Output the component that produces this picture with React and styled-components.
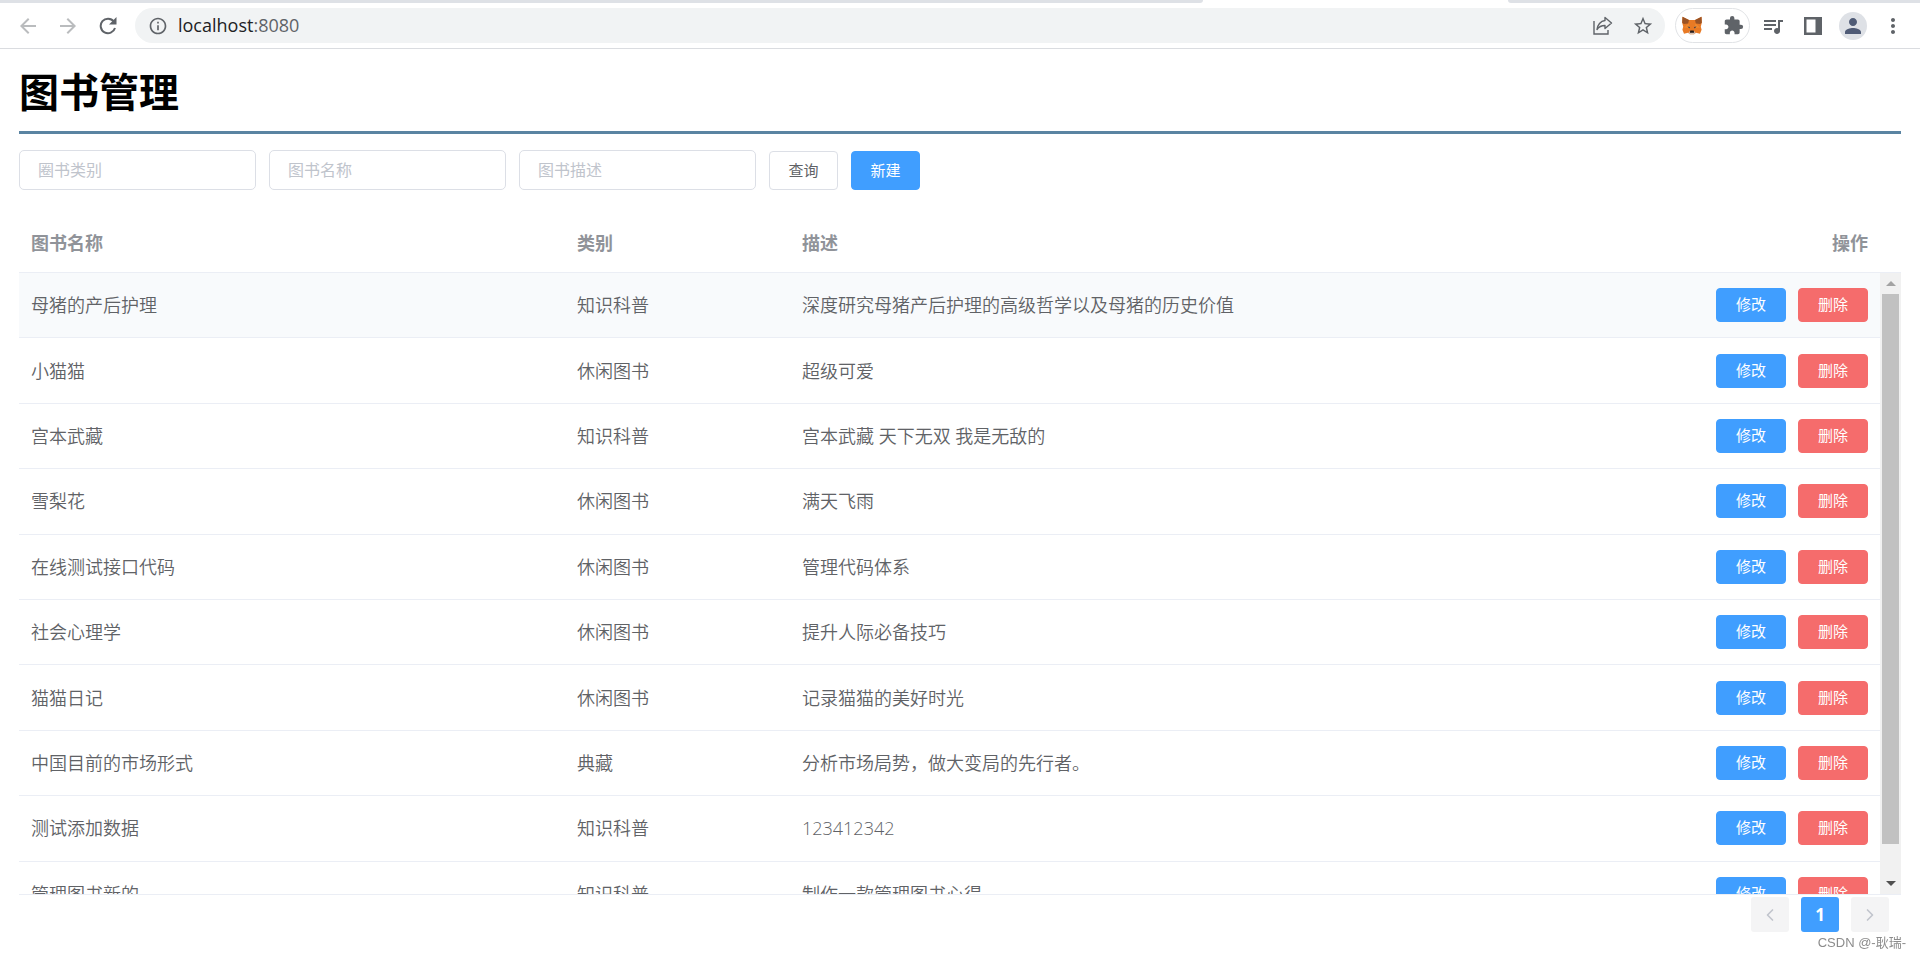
import React from "react";
import styled, { createGlobalStyle, css } from "styled-components";
import { MdArrowBack, MdArrowForward, MdInfoOutline, MdStarBorder, MdExtension, MdQueueMusic, MdPerson, MdMoreVert } from "react-icons/md";
import { ChevronLeft, ChevronRight } from "lucide-react";

const Global = createGlobalStyle`
  * { box-sizing: border-box; }
  body {
    margin: 0;
    background: #fff;
    font-family: "Open Sans", "Noto Sans CJK SC", sans-serif;
    color: #606266;
  }
  button, input { font-family: inherit; }
`;

/* Browser chrome */
const TabStrip = styled.div`
  display: flex;
  height: 3px;
  background: #fff;
`;
const InactiveTabs = styled.div`
  flex: ${(p) => p.$grow};
  background: #dee1e6;
  border-radius: ${(p) => (p.$end ? "0 0 0 8px" : "0 0 8px 0")};
`;
const ActiveTab = styled.div`
  flex: 305;
`;
const Toolbar = styled.header`
  display: flex;
  align-items: center;
  height: 46px;
  padding: 0 15px 0 16px;
  border-bottom: 1px solid #dadce0;
`;
const IconButton = styled.button`
  display: flex;
  align-items: center;
  justify-content: center;
  flex: none;
  width: 24px;
  height: 24px;
  padding: 0;
  border: 0;
  background: none;
  color: ${(p) => (p.$dim ? "#babcbe" : "#5f6368")};
`;
const NavGroup = styled.nav`
  display: flex;
  gap: 16px;
  margin-right: 15px;
`;
const AddressBar = styled.div`
  display: flex;
  align-items: center;
  flex: 1;
  height: 35px;
  padding: 0 10px 0 11px;
  gap: 8px;
  border-radius: 18px;
  background: #f1f3f4;
`;
const Address = styled.div`
  flex: 1;
  padding-bottom: 2px;
  font-size: 18px;
  line-height: 24px;
  color: #5f6368;
  b { font-weight: 400; color: #202124; }
`;
const AddressActions = styled.div`
  display: flex;
  gap: 16px;
`;
const Extensions = styled.div`
  display: flex;
  align-items: center;
  justify-content: space-between;
  width: 75px;
  height: 35px;
  margin: 0 11px 0 10px;
  padding: 0 4px;
  border: 1px solid #e1e3e6;
  border-radius: 18px;
`;
const BrowserActions = styled.div`
  display: flex;
  align-items: center;
  gap: 16px;
`;
const Avatar = styled.button`
  display: flex;
  align-items: center;
  justify-content: center;
  width: 28px;
  height: 28px;
  margin: 0 -2px;
  padding: 0;
  border: 0;
  border-radius: 50%;
  background: #dee1e6;
  color: #4f5b76;
`;

/* Page */
const Page = styled.main`
  padding: 0 19px;
`;
const Title = styled.h1`
  margin: 0 0 16px;
  padding: 13px 0 9px;
  border-bottom: 3px solid #5a84a2;
  font-size: 40px;
  line-height: 60px;
  color: #000;
`;
const SearchForm = styled.form`
  display: flex;
  align-items: flex-end;
  gap: 13px;
  margin-bottom: 24px;
`;
const Field = styled.input`
  width: 237px;
  height: 40px;
  padding: 0 18px;
  border: 1px solid #dcdfe6;
  border-radius: 5px;
  font-size: 16px;
  color: #606266;
  outline: none;
  &::placeholder { color: #c0c4cc; opacity: 1; }
`;
const tones = {
  plain: css`background: #fff; border-color: #dcdfe6; color: #606266;`,
  primary: css`background: #409eff; border-color: #409eff; color: #fff;`,
  danger: css`background: #f56c6c; border-color: #f56c6c; color: #fff;`,
};
const Button = styled.button`
  height: ${(p) => (p.$small ? 34 : 39)}px;
  width: ${(p) => (p.$small ? 70 : 69)}px;
  padding: 0 0 2px;
  border: 1px solid;
  border-radius: 4px;
  font-size: 15px;
  line-height: 20px;
  ${(p) => tones[p.$tone]}
`;
const HeadWrap = styled.div`
  padding-right: 21px;
  border-bottom: 1px solid #ebeef5;
`;
const Table = styled.table`
  width: 100%;
  height: ${(p) => (p.$body ? "654px" : "auto")};
  table-layout: fixed;
  border-spacing: 0;
  font-size: 18px;
  line-height: 28px;
`;
const HeadCell = styled.th`
  padding: 15px 12px;
  text-align: ${(p) => (p.$right ? "right" : "left")};
  font-weight: 700;
  color: #909399;
`;
const Cell = styled.td`
  padding: 0 12px;
  border-bottom: 1px solid #ebeef5;
  font-weight: 350;
`;
const Row = styled.tr`
  background: ${(p) => (p.$hovered ? "#f8fafc" : "#fff")};
`;
const RowActions = styled.div`
  display: flex;
  justify-content: flex-end;
  gap: 12px;
`;
const BodyWrap = styled.div`
  display: flex;
  height: 622px;
  border-bottom: 1px solid #ebeef5;
`;
const Scroller = styled.div`
  flex: 1;
  overflow-y: auto;
  scrollbar-width: none;
`;
const ScrollBar = styled.div`
  display: flex;
  flex-direction: column;
  width: 21px;
  background: #f1f1f1;
`;
const ScrollArrow = styled.div`
  display: flex;
  align-items: center;
  justify-content: center;
  height: 21px;
`;
const ScrollTrack = styled.div`
  flex: 1;
  padding: 0 2px;
`;
const ScrollThumb = styled.div`
  height: 95%;
  background: #c1c1c1;
`;
const Pagination = styled.nav`
  display: flex;
  justify-content: flex-end;
  gap: 12px;
  padding: 2px 12px 0;
`;
const PageButton = styled.button`
  display: flex;
  align-items: center;
  justify-content: center;
  width: 38px;
  height: 35px;
  padding: 0;
  border: 0;
  border-radius: 3px;
  font-size: 17px;
  font-weight: 700;
  background: ${(p) => (p.$active ? "#409eff" : "#f4f4f5")};
  color: ${(p) => (p.$active ? "#fff" : "#c0c4cc")};
`;
const Watermark = styled.div`
  position: fixed;
  right: 14px;
  bottom: 7px;
  font-family: "Liberation Sans", "Noto Sans CJK SC", sans-serif;
  font-size: 13px;
  line-height: 20px;
  color: #8c8c8c;
`;

const ShareIcon = () => (
  <svg width="22" height="22" viewBox="0 0 22 22" fill="none" stroke="#5f6368" strokeWidth="1.4">
    <path d="M2 6v13h14v-4" />
    <path d="M13 2.5 19.5 8 13 13.5v-3c-3.500 0-6 1-8 4 .5-4.500 3.500-8.500 8-9z" strokeLinejoin="round" />
  </svg>
);
const FoxIcon = () => (
  <svg width="20" height="19" viewBox="0 0 20 19">
    <path d="M.5.8 7 4h6L19.500.8l.3 6-1 4 .8 3-1.600 4-4-1-2 1.500H8L6 16.800l-4 1-1.600-4 .8-3-1-4z" fill="#e87a25" />
    <path d="M.5.8 7 4l-.8 3.500L1.800 8 .2 6.800zM19.500.8 13 4l.8 3.500 4.400.5 1.600-1.200z" fill="#9a5325" />
    <path d="m6.500 7.500-4.500 4 4 .5 1.500-1zM13.500 7.500l4.500 4-4 .5-1.500-1z" fill="#ee8a30" />
    <path d="m5.500 10.500 2.500.6-.6 1.400zM14.500 10.500l-2.500.6.6 1.400z" fill="#2f3b52" />
    <path d="m8 15-1.500 1.800L8 18.300h4l1.500-1.500L12 15z" fill="#d7c1b3" />
    <path d="M8.300 14.600h3.400l.5 2.200H7.800z" fill="#241a18" />
  </svg>
);
const PanelIcon = () => (
  <svg width="18" height="18" viewBox="0 0 18 18">
    <path fill="#5f6368" fillRule="evenodd" d="M0 0h18v18H0zM2.500 2.500v13h9v-13z" />
  </svg>
);
const ReloadIcon = () => (
  <svg width="18" height="18" viewBox="0 0 18 18">
    <path d="M14.800 4.500A7.300 7.300 0 1 0 16 11" fill="none" stroke="#5f6368" strokeWidth="2" />
    <path d="M17.500 0v7.500H10z" fill="#5f6368" />
  </svg>
);
const Triangle = ({ down }) => (
  <svg width="10" height="5" viewBox="0 0 10 5">
    <path d={down ? "M0 0h10L5 5z" : "M0 5h10L5 0z"} fill={down ? "#505050" : "#a3a3a3"} />
  </svg>
);

const books = [
  ["母猪的产后护理", "知识科普", "深度研究母猪产后护理的高级哲学以及母猪的历史价值"],
  ["小猫猫", "休闲图书", "超级可爱"],
  ["宫本武藏", "知识科普", "宫本武藏 天下无双 我是无敌的"],
  ["雪梨花", "休闲图书", "满天飞雨"],
  ["在线测试接口代码", "休闲图书", "管理代码体系"],
  ["社会心理学", "休闲图书", "提升人际必备技巧"],
  ["猫猫日记", "休闲图书", "记录猫猫的美好时光"],
  ["中国目前的市场形式", "典藏", "分析市场局势，做大变局的先行者。"],
  ["测试添加数据", "知识科普", "123412342"],
  ["管理图书新的", "知识科普", "制作一款管理图书心得"],
];

const Col = styled.col`
  width: ${(p) => (p.$width ? `${p.$width}px` : "auto")};
`;
const Columns = () => (
  <colgroup>
    <Col $width={546} />
    <Col $width={225} />
    <Col />
    <Col $width={225} />
  </colgroup>
);

function BrowserChrome() {
  return (
    <>
      <TabStrip>
        <InactiveTabs $grow={1203} />
        <ActiveTab />
        <InactiveTabs $grow={412} $end />
      </TabStrip>
      <Toolbar>
        <NavGroup>
          <IconButton $dim aria-label="后退"><MdArrowBack size={24} /></IconButton>
          <IconButton $dim aria-label="前进"><MdArrowForward size={24} /></IconButton>
          <IconButton aria-label="刷新"><ReloadIcon /></IconButton>
        </NavGroup>
        <AddressBar>
          <IconButton aria-label="网站信息"><MdInfoOutline size={20} /></IconButton>
          <Address><b>localhost</b>:8080</Address>
          <AddressActions>
            <IconButton aria-label="分享"><ShareIcon /></IconButton>
            <IconButton aria-label="收藏"><MdStarBorder size={22} /></IconButton>
          </AddressActions>
        </AddressBar>
        <Extensions>
          <IconButton aria-label="MetaMask"><FoxIcon /></IconButton>
          <IconButton aria-label="扩展程序"><MdExtension size={21} /></IconButton>
        </Extensions>
        <BrowserActions>
          <IconButton aria-label="媒体"><MdQueueMusic size={24} /></IconButton>
          <IconButton aria-label="侧边栏"><PanelIcon /></IconButton>
          <Avatar aria-label="用户"><MdPerson size={24} /></Avatar>
          <IconButton aria-label="菜单"><MdMoreVert size={24} /></IconButton>
        </BrowserActions>
      </Toolbar>
    </>
  );
}

export default function App() {
  return (
    <>
      <Global />
      <BrowserChrome />
      <Page>
        <Title>图书管理</Title>
        <SearchForm onSubmit={(e) => e.preventDefault()}>
          <Field placeholder="圈书类别" aria-label="图书类别" />
          <Field placeholder="图书名称" aria-label="图书名称" />
          <Field placeholder="图书描述" aria-label="图书描述" />
          <Button $tone="plain" type="submit">查询</Button>
          <Button $tone="primary" type="button">新建</Button>
        </SearchForm>
        <HeadWrap>
          <Table>
            <Columns />
            <thead>
              <tr>
                <HeadCell>图书名称</HeadCell>
                <HeadCell>类别</HeadCell>
                <HeadCell>描述</HeadCell>
                <HeadCell $right>操作</HeadCell>
              </tr>
            </thead>
          </Table>
        </HeadWrap>
        <BodyWrap>
          <Scroller>
            <Table $body>
              <Columns />
              <tbody>
                {books.map(([name, kind, text], i) => (
                  <Row key={name} $hovered={i === 0}>
                    <Cell>{name}</Cell>
                    <Cell>{kind}</Cell>
                    <Cell>{text}</Cell>
                    <Cell>
                      <RowActions>
                        <Button $small $tone="primary">修改</Button>
                        <Button $small $tone="danger">删除</Button>
                      </RowActions>
                    </Cell>
                  </Row>
                ))}
              </tbody>
            </Table>
          </Scroller>
          <ScrollBar aria-hidden="true">
            <ScrollArrow><Triangle /></ScrollArrow>
            <ScrollTrack><ScrollThumb /></ScrollTrack>
            <ScrollArrow><Triangle down /></ScrollArrow>
          </ScrollBar>
        </BodyWrap>
        <Pagination aria-label="分页">
          <PageButton aria-label="上一页"><ChevronLeft size={20} /></PageButton>
          <PageButton $active>1</PageButton>
          <PageButton aria-label="下一页"><ChevronRight size={20} /></PageButton>
        </Pagination>
      </Page>
      <Watermark>CSDN @-耿瑞-</Watermark>
    </>
  );
}
